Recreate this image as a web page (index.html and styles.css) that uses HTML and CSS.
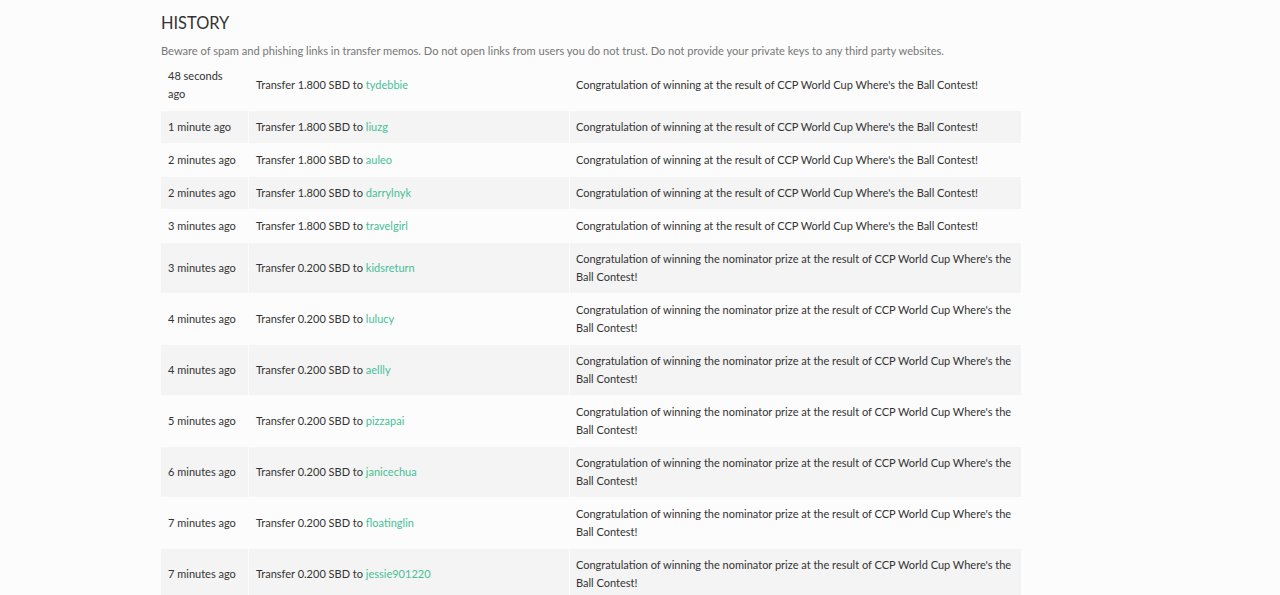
FILE: index.html
```html
<!DOCTYPE html>
<html>
<head>
<meta charset="utf-8">
<link rel="stylesheet" href="styles.css">
</head>
<body>
<main class="wallet">
  <h4 class="title">HISTORY</h4>
  <p class="warning">Beware of spam and phishing links in transfer memos. Do not open links from users you do not trust. Do not provide your private keys to any third party websites.</p>
  <table class="history">
    <tbody>
      <tr><td class="time">48 seconds ago</td><td class="op">Transfer 1.800 SBD to <a href="#">tydebbie</a></td><td class="memo">Congratulation of winning at the result of CCP World Cup Where's the Ball Contest!</td></tr>
      <tr><td class="time">1 minute ago</td><td class="op">Transfer 1.800 SBD to <a href="#">liuzg</a></td><td class="memo">Congratulation of winning at the result of CCP World Cup Where's the Ball Contest!</td></tr>
      <tr><td class="time">2 minutes ago</td><td class="op">Transfer 1.800 SBD to <a href="#">auleo</a></td><td class="memo">Congratulation of winning at the result of CCP World Cup Where's the Ball Contest!</td></tr>
      <tr><td class="time">2 minutes ago</td><td class="op">Transfer 1.800 SBD to <a href="#">darrylnyk</a></td><td class="memo">Congratulation of winning at the result of CCP World Cup Where's the Ball Contest!</td></tr>
      <tr><td class="time">3 minutes ago</td><td class="op">Transfer 1.800 SBD to <a href="#">travelgirl</a></td><td class="memo">Congratulation of winning at the result of CCP World Cup Where's the Ball Contest!</td></tr>
      <tr><td class="time">3 minutes ago</td><td class="op">Transfer 0.200 SBD to <a href="#">kidsreturn</a></td><td class="memo">Congratulation of winning the nominator prize at the result of CCP World Cup Where's the Ball Contest!</td></tr>
      <tr><td class="time">4 minutes ago</td><td class="op">Transfer 0.200 SBD to <a href="#">lulucy</a></td><td class="memo">Congratulation of winning the nominator prize at the result of CCP World Cup Where's the Ball Contest!</td></tr>
      <tr><td class="time">4 minutes ago</td><td class="op">Transfer 0.200 SBD to <a href="#">aellly</a></td><td class="memo">Congratulation of winning the nominator prize at the result of CCP World Cup Where's the Ball Contest!</td></tr>
      <tr><td class="time">5 minutes ago</td><td class="op">Transfer 0.200 SBD to <a href="#">pizzapai</a></td><td class="memo">Congratulation of winning the nominator prize at the result of CCP World Cup Where's the Ball Contest!</td></tr>
      <tr><td class="time">6 minutes ago</td><td class="op">Transfer 0.200 SBD to <a href="#">janicechua</a></td><td class="memo">Congratulation of winning the nominator prize at the result of CCP World Cup Where's the Ball Contest!</td></tr>
      <tr><td class="time">7 minutes ago</td><td class="op">Transfer 0.200 SBD to <a href="#">floatinglin</a></td><td class="memo">Congratulation of winning the nominator prize at the result of CCP World Cup Where's the Ball Contest!</td></tr>
      <tr><td class="time">7 minutes ago</td><td class="op">Transfer 0.200 SBD to <a href="#">jessie901220</a></td><td class="memo">Congratulation of winning the nominator prize at the result of CCP World Cup Where's the Ball Contest!</td></tr>
    </tbody>
  </table>
</main>
</body>
</html>
```

FILE: styles.css
```css
html, body {
  margin: 0;
  padding: 0;
  background: #fcfcfc;
}
body {
  font-family: Lato, "Liberation Sans", sans-serif;
  color: #333333;
  font-size: 11px;
}
.wallet {
  width: 862px;
  margin-left: 160px;
  padding-top: 12px;
}
.title {
  margin: 0 0 0 1px;
  font-size: 16.4px;
  font-weight: 400;
  line-height: 22px;
  color: #333;
}
.warning {
  margin: 8px 0 0 1px;
  font-size: 11.1px;
  line-height: 18px;
  color: #777777;
}
.history {
  width: 862px;
  margin-top: -1px;
  border-collapse: separate;
  border-spacing: 1px 1px;
  table-layout: fixed;
}
.history td {
  padding: 7px 7px;
  line-height: 18px;
  vertical-align: middle;
  font-size: 11px;
  color: #333;
}
.history tr:nth-child(even) td {
  background: #f4f4f4;
}
.history td.time { width: 73px; }
.history td.op { width: 306px; }
.history td.memo { width: auto; padding-left: 6px; }
.history a {
  color: #44c196;
  text-decoration: none;
}
```
